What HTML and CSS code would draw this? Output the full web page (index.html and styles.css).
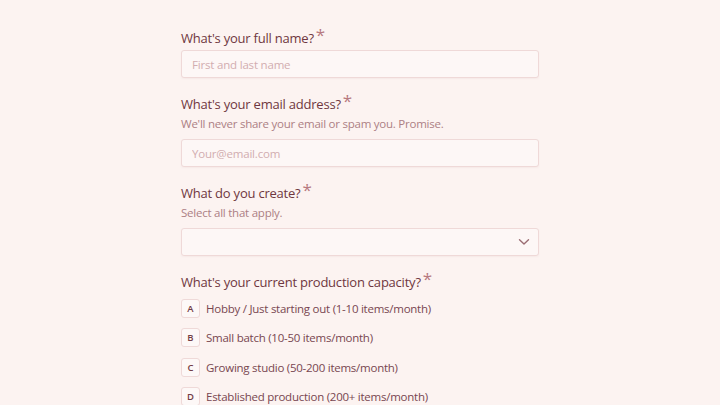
FILE: index.html
```html
<!DOCTYPE html>
<html lang="en">
<head>
  <meta charset="UTF-8">
  <title>Maker Signup</title>
  <link rel="stylesheet" href="styles.css">
</head>
<body>
  <form class="form">
    <div class="field">
      <label class="label" for="name">What's your full name?<span class="req">*</span></label>
      <input class="input" type="text" id="name" placeholder="First and last name">
    </div>

    <div class="field">
      <label class="label" for="email">What's your email address?<span class="req">*</span></label>
      <p class="hint">We'll never share your email or spam you. Promise.</p>
      <input class="input" type="email" id="email" placeholder="Your@email.com">
    </div>

    <div class="field">
      <label class="label">What do you create?<span class="req">*</span></label>
      <p class="hint">Select all that apply.</p>
      <div class="select">
        <svg class="chevron" width="12" height="8" viewBox="0 0 12 8">
          <path d="M1.5 1.8 L6 6 L10.5 1.8" fill="none" stroke="#9b6d73" stroke-width="1.4" stroke-linecap="round" stroke-linejoin="round"/>
        </svg>
      </div>
    </div>

    <div class="field">
      <label class="label">What's your current production capacity?<span class="req">*</span></label>
      <ul class="choices">
        <li class="choice"><span class="key">A</span>Hobby / Just starting out (1-10 items/month)</li>
        <li class="choice"><span class="key">B</span>Small batch (10-50 items/month)</li>
        <li class="choice"><span class="key">C</span>Growing studio (50-200 items/month)</li>
        <li class="choice"><span class="key">D</span>Established production (200+ items/month)</li>
      </ul>
    </div>
  </form>
</body>
</html>
```

FILE: styles.css
```css
body {
  margin: 0;
  background: #fcf3f1;
  font-family: "Open Sans", "Noto Sans", sans-serif;
  color: #733e46;
}
.form {
  width: 358px;
  margin: 0 auto;
  padding-top: 28px;
  display: flex;
  flex-direction: column;
  gap: 16px;
}
.field {
  display: flex;
  flex-direction: column;
}
.label {
  display: block;
  font-size: 13px;
  letter-spacing: -0.22px;
  font-weight: 500;
  line-height: 20px;
  margin-bottom: 2px;
  color: #6f3740;
}
.req {
  color: #b7797f;
  font-size: 17px;
  font-weight: 400;
  line-height: 0;
  margin-left: 2px;
  position: relative;
  top: -2px;
}
.hint {
  margin: -2px 0 5px;
  font-size: 11.5px;
  letter-spacing: -0.24px;
  line-height: 20px;
  color: #ac8084;
}
.input, .select {
  box-sizing: border-box;
  width: 100%;
  height: 28px;
  border: 1px solid #efd9d8;
  border-radius: 3px;
  background: #fdf7f6;
  box-shadow: 0 1px 2px rgba(150, 90, 90, 0.06);
}
.input {
  padding: 0 10px;
  font-family: inherit;
  font-size: 11.5px;
  letter-spacing: -0.19px;
  color: #733e46;
  outline: none;
}
.input::placeholder {
  color: #d2adb0;
}
.select {
  display: flex;
  align-items: center;
  justify-content: flex-end;
  padding-right: 8px;
}
.choices {
  list-style: none;
  margin: 4px 0 0;
  padding: 0;
  display: flex;
  flex-direction: column;
  gap: 9.5px;
}
.choice {
  display: flex;
  align-items: center;
  gap: 6px;
  height: 20px;
  font-size: 11.5px;
  letter-spacing: -0.25px;
  font-weight: 500;
  color: #784650;
}
.key {
  box-sizing: border-box;
  width: 19px;
  height: 19px;
  display: flex;
  align-items: center;
  justify-content: center;
  border: 1px solid #efd9d8;
  border-radius: 3px;
  background: #fdf8f7;
  font-size: 9.5px;
  font-weight: 600;
  letter-spacing: 0;
  color: #733e46;
}
```
